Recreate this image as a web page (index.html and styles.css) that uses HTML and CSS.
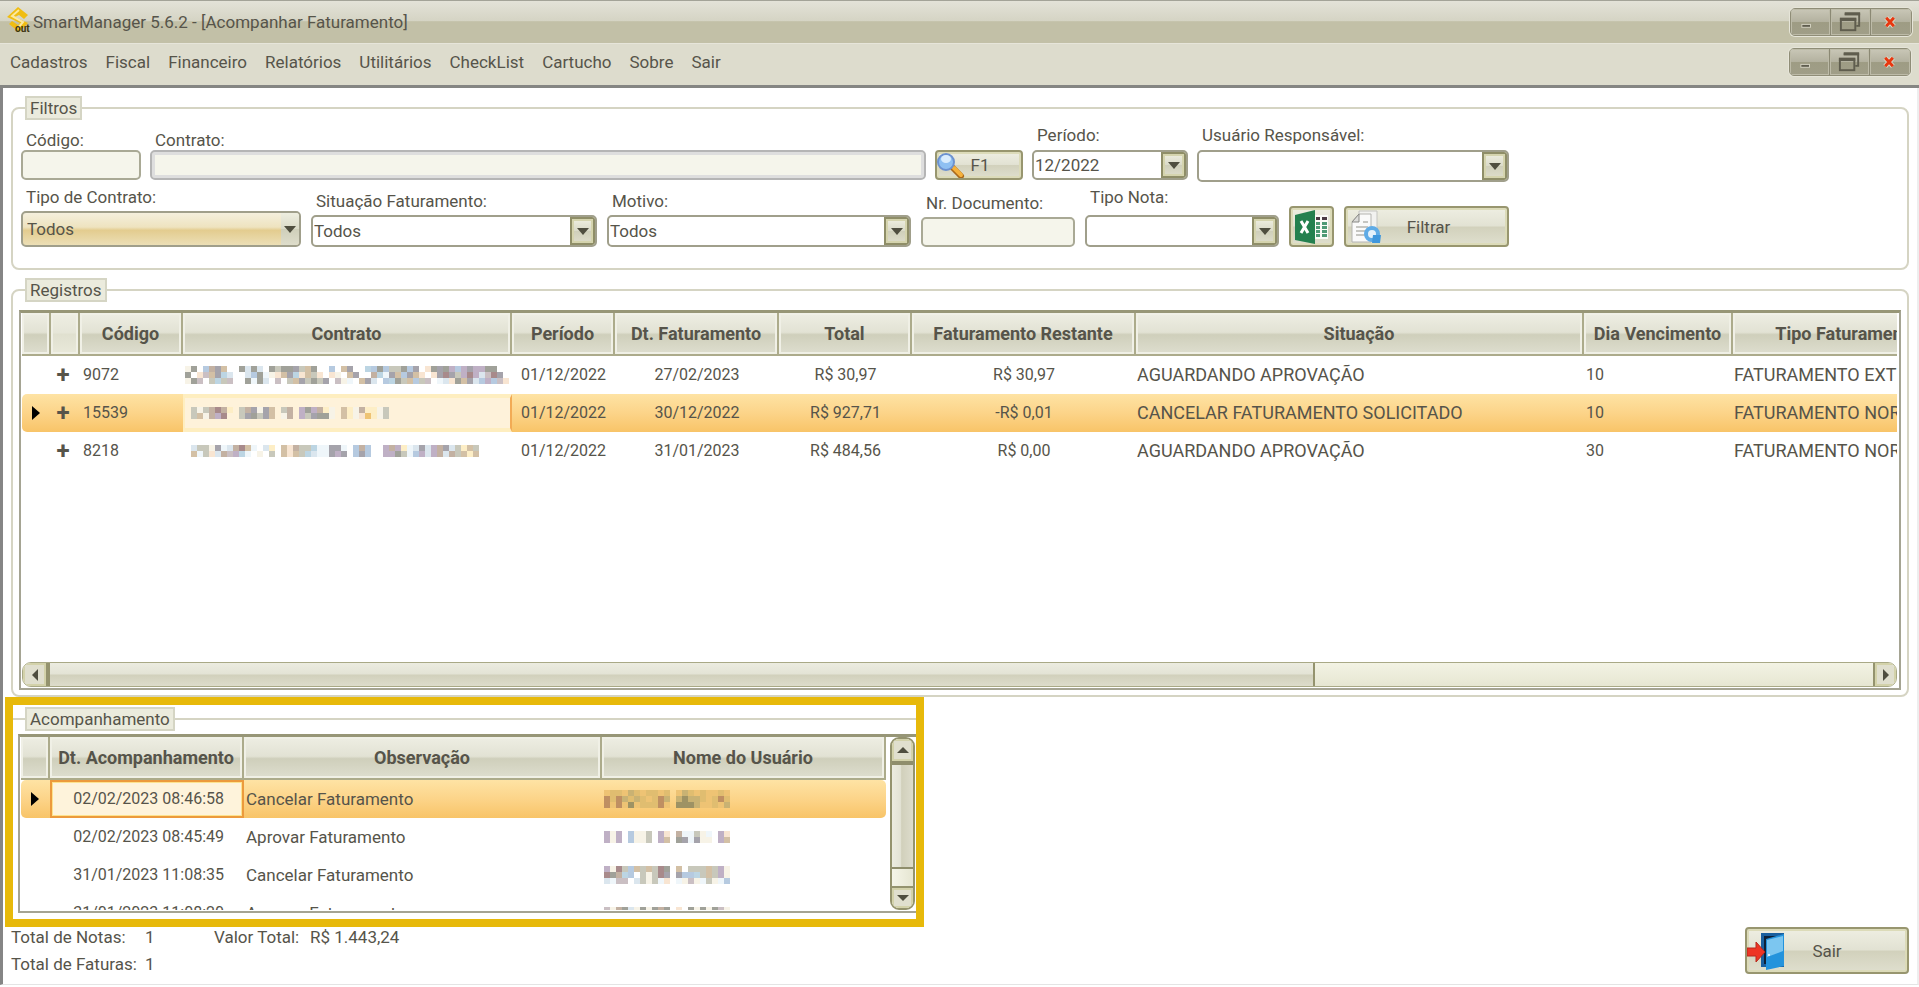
FILE: index.html
```html
<!DOCTYPE html>
<html lang="pt-BR">
<head>
  <meta charset="UTF-8" />
  <meta name="viewport" content="width=device-width, initial-scale=1" />
  <title>SmartManager 5.6.2 - [Acompanhar Faturamento]</title>
  <link rel="stylesheet" href="styles.css">
</head>
<body>
  <header class="titlebar">
    <svg class="logo" viewBox="0 0 24 26" aria-hidden="true">
      <path d="M11 0 L21 8 L17 12 L12 8 L8 10 L21 16 L12 25 L2 17 L5 14 L11 18 L13 16 L0 10 Z" fill="#f0bd12"/>
      <path d="M12 3 L5 9 L16 15 L11 21" fill="none" stroke="#fbe9a0" stroke-width="2"/>
      <text x="8" y="25" class="logo-text">out</text>
    </svg>
    <h1>SmartManager 5.6.2 - [Acompanhar Faturamento]</h1>
    <div class="winbtns">
      <button type="button" aria-label="Minimizar"><svg viewBox="0 0 40 27"><rect x="11" y="16" width="9" height="3" fill="#5f5d4e" stroke="#d5d3c2"/></svg></button>
      <button type="button" aria-label="Restaurar"><svg viewBox="0 0 40 27"><path d="M14 5.500h15v12h-3" fill="none" stroke="#5f5d4e" stroke-width="2"/><path d="M14 5h16" stroke="#5f5d4e" stroke-width="3"/><rect x="10" y="10" width="15" height="12" fill="none" stroke="#5f5d4e" stroke-width="2"/><path d="M9 11h17" stroke="#5f5d4e" stroke-width="3"/></svg></button>
      <button type="button" aria-label="Fechar"><svg viewBox="0 0 40 27"><path d="M15 9l8 9M23 9l-8 9" stroke="#d9d6c6" stroke-width="5"/><path d="M15 9l8 9M23 9l-8 9" stroke="#e8370f" stroke-width="3"/></svg></button>
    </div>
  </header>

  <nav class="menubar">
    <a href="#">Cadastros</a>
    <a href="#">Fiscal</a>
    <a href="#">Financeiro</a>
    <a href="#">Relatórios</a>
    <a href="#">Utilitários</a>
    <a href="#">CheckList</a>
    <a href="#">Cartucho</a>
    <a href="#">Sobre</a>
    <a href="#">Sair</a>
    <div class="winbtns">
      <button type="button" aria-label="Minimizar janela"><svg viewBox="0 0 40 27"><rect x="11" y="16" width="9" height="3" fill="#5f5d4e" stroke="#d5d3c2"/></svg></button>
      <button type="button" aria-label="Restaurar janela"><svg viewBox="0 0 40 27"><path d="M14 5.500h15v12h-3" fill="none" stroke="#5f5d4e" stroke-width="2"/><path d="M14 5h16" stroke="#5f5d4e" stroke-width="3"/><rect x="10" y="10" width="15" height="12" fill="none" stroke="#5f5d4e" stroke-width="2"/><path d="M9 11h17" stroke="#5f5d4e" stroke-width="3"/></svg></button>
      <button type="button" aria-label="Fechar janela"><svg viewBox="0 0 40 27"><path d="M15 9l8 9M23 9l-8 9" stroke="#d9d6c6" stroke-width="5"/><path d="M15 9l8 9M23 9l-8 9" stroke="#e8370f" stroke-width="3"/></svg></button>
    </div>
  </nav>

  <main>
    <fieldset class="group filtros">
      <legend>Filtros</legend>
      <div class="row row-top">
        <div class="field w-codigo low">
          <label for="codigo">Código:</label>
          <input id="codigo" type="text">
        </div>
        <div class="field grow low">
          <label for="contrato">Contrato:</label>
          <input id="contrato" class="locked" type="text" readonly>
        </div>
        <button type="button" class="btn btn-f1">
          <svg width="28" height="26" viewBox="0 0 28 26" aria-hidden="true">
            <path d="M16 16 L24 24" stroke="#a9691c" stroke-width="6" stroke-linecap="round"/>
            <path d="M17 16 L24 23" stroke="#f5b13c" stroke-width="4" stroke-linecap="round"/>
            <circle cx="9" cy="10" r="8" fill="#8fc0f2" stroke="#6d92d0" stroke-width="2"/>
            <ellipse cx="9" cy="7" rx="5" ry="4" fill="#d9ecfd"/>
          </svg>
          <span>F1</span>
        </button>
        <div class="field w-periodo">
          <label for="periodo">Período:</label>
          <div class="combo short"><select id="periodo"><option>12/2022</option></select><span class="arrow"></span></div>
        </div>
        <div class="field w-usuario">
          <label for="usuario">Usuário Responsável:</label>
          <div class="combo"><select id="usuario"><option></option></select><span class="arrow"></span></div>
        </div>
      </div>
      <div class="row row-bottom">
        <div class="field w-tipo">
          <label for="tipo">Tipo de Contrato:</label>
          <div class="combo active"><select id="tipo"><option>Todos</option></select><span class="arrow"></span></div>
        </div>
        <div class="field w-situacao">
          <label for="situacao">Situação Faturamento:</label>
          <div class="combo"><select id="situacao"><option>Todos</option></select><span class="arrow"></span></div>
        </div>
        <div class="field grow">
          <label for="motivo">Motivo:</label>
          <div class="combo"><select id="motivo"><option>Todos</option></select><span class="arrow"></span></div>
        </div>
        <div class="field w-doc">
          <label for="doc">Nr. Documento:</label>
          <input id="doc" type="text">
        </div>
        <div class="field w-nota">
          <label for="nota">Tipo Nota:</label>
          <div class="combo"><select id="nota"><option></option></select><span class="arrow"></span></div>
        </div>
        <button type="button" class="btn btn-excel" aria-label="Exportar para Excel">
          <svg width="34" height="34" viewBox="0 0 34 34" aria-hidden="true">
            <rect x="17" y="5" width="16" height="24" fill="#fbfbf8"/>
            <path d="M21 7h4v3h-4zM27 7h5v3h-5z" fill="#4b3b45"/>
            <path d="M21 12h4v3h-4zM27 12h5v3h-5zM21 16h4v3h-4zM27 16h5v3h-5zM21 20h4v3h-4zM27 20h5v3h-5zM21 24h4v3h-4zM27 24h5v3h-5z" fill="#4f9a76"/>
            <path d="M0 5 L20 0 V34 L0 30 Z" fill="#24804f"/>
            <path d="M6 11 L13 23 M13 11 L6 23" stroke="#fff" stroke-width="3"/>
          </svg>
        </button>
        <button type="button" class="btn btn-filtrar">
          <svg width="32" height="34" viewBox="0 0 32 34" aria-hidden="true">
            <path d="M9 1h18v25H9z" fill="#f2f2f0" stroke="#c4c4c0"/>
            <path d="M9 4 L2 12 V32 H21 V4 Z" fill="#fafafa" stroke="#b4b4b0"/>
            <path d="M9 4 V12 H2 Z" fill="#dcdcda" stroke="#888884"/>
            <path d="M6 17h12M6 21h10M6 25h9M13 12h5" stroke="#c6c6c2" stroke-width="2"/>
            <circle cx="22" cy="24" r="6" fill="#e4f1fb" stroke="#5fabe6" stroke-width="4"/>
            <path d="M23 25 L31 25 L30 33 L22 33 Z" fill="#3f97dd"/>
          </svg>
          <span>Filtrar</span>
        </button>
      </div>
    </fieldset>

    <fieldset class="group registros">
      <legend>Registros</legend>
      <div class="grid">
        <div class="grid-view">
          <table class="tbl-registros">
            <colgroup>
              <col class="c-mark"><col class="c-plus"><col class="c-cod"><col class="c-contrato"><col class="c-periodo"><col class="c-dt">
              <col class="c-total"><col class="c-rest"><col class="c-sit"><col class="c-dia"><col class="c-tipofat">
            </colgroup>
            <thead>
              <tr>
                <th></th><th class="soft"></th><th>Código</th><th>Contrato</th><th>Período</th><th>Dt. Faturamento</th>
                <th>Total</th><th>Faturamento Restante</th><th>Situação</th><th>Dia Vencimento</th><th>Tipo Faturamento</th>
              </tr>
            </thead>
            <tbody>
              <tr>
                <td></td><td class="plus">+</td><td class="cod">9072</td><td><span class="mosaic" data-m="a"></span></td>
                <td class="num">01/12/2022</td><td class="num">27/02/2023</td><td class="num">R$ 30,97</td><td class="num">R$ 30,97</td>
                <td class="caps">AGUARDANDO APROVAÇÃO</td><td class="dia">10</td><td class="caps">FATURAMENTO EXTRA</td>
              </tr>
              <tr class="selected">
                <td><span class="marker"></span></td><td class="plus">+</td><td class="cod">15539</td><td class="blank"><span class="mosaic" data-m="b"></span></td>
                <td class="num">01/12/2022</td><td class="num">30/12/2022</td><td class="num">R$ 927,71</td><td class="num">-R$ 0,01</td>
                <td class="caps">CANCELAR FATURAMENTO SOLICITADO</td><td class="dia">10</td><td class="caps">FATURAMENTO NORMAL</td>
              </tr>
              <tr>
                <td></td><td class="plus">+</td><td class="cod">8218</td><td><span class="mosaic" data-m="c"></span></td>
                <td class="num">01/12/2022</td><td class="num">31/01/2023</td><td class="num">R$ 484,56</td><td class="num">R$ 0,00</td>
                <td class="caps">AGUARDANDO APROVAÇÃO</td><td class="dia">30</td><td class="caps">FATURAMENTO NORMAL</td>
              </tr>
            </tbody>
          </table>
        </div>
        <div class="hscroll">
          <button type="button" class="sb-left" aria-label="Rolar para a esquerda"></button>
          <div class="thumb"></div>
          <div class="track"></div>
          <button type="button" class="sb-right" aria-label="Rolar para a direita"></button>
        </div>
      </div>
    </fieldset>

    <section class="destaque">
      <fieldset class="group acomp">
        <legend>Acompanhamento</legend>
        <div class="grid grid-acomp">
          <div class="grid-view">
            <table class="tbl-acomp">
              <colgroup><col class="c-mark"><col class="c-dtac"><col class="c-obs"><col></colgroup>
              <thead>
                <tr><th></th><th>Dt. Acompanhamento</th><th>Observação</th><th>Nome do Usuário</th></tr>
              </thead>
              <tbody>
                <tr class="selected"><td><span class="marker"></span></td><td class="when focus">02/02/2023 08:46:58</td><td>Cancelar Faturamento</td><td><span class="mosaic" data-m="d"></span></td></tr>
                <tr><td></td><td class="when">02/02/2023 08:45:49</td><td>Aprovar Faturamento</td><td><span class="mosaic" data-m="e"></span></td></tr>
                <tr><td></td><td class="when">31/01/2023 11:08:35</td><td>Cancelar Faturamento</td><td><span class="mosaic" data-m="f"></span></td></tr>
                <tr><td></td><td class="when">31/01/2023 11:08:20</td><td>Aprovar Faturamento</td><td><span class="mosaic" data-m="g"></span></td></tr>
              </tbody>
            </table>
          </div>
          <div class="vscroll">
            <button type="button" class="sb-up" aria-label="Rolar para cima"></button>
            <div class="thumb"></div>
            <div class="track"></div>
            <button type="button" class="sb-down" aria-label="Rolar para baixo"></button>
          </div>
        </div>
      </fieldset>
    </section>

    <footer class="rodape">
      <dl class="totais">
        <dt>Total de Notas:</dt><dd>1</dd><dt>Valor Total:</dt><dd>R$ 1.443,24</dd>
        <dt>Total de Faturas:</dt><dd>1</dd>
      </dl>
      <button type="button" class="btn btn-sair">
        <svg width="38" height="40" viewBox="0 0 38 40" aria-hidden="true">
          <path d="M14 2h23v34H14z" fill="#1a5f9e"/>
          <path d="M17 5h17v28H17z" fill="#0f2036"/>
          <path d="M19 8 L37 3 V35 L19 39 Z" fill="#2493dc"/>
          <path d="M20 9 L36 5 V20 L20 26 Z" fill="#7cc6f0"/>
          <circle cx="22" cy="24" r="1" fill="#fff"/>
          <path d="M0 17h9v-6l9 10l-9 10v-6H0z" fill="#ee3524" stroke="#b8281c"/>
        </svg>
        <span>Sair</span>
      </button>
    </footer>
  </main>

  <script src="script.js"></script>
</body>
</html>
```
FILE: styles.css
```css
* {
  box-sizing: border-box;
}

body {
  margin: 0;
  min-height: 100vh;
  display: flex;
  flex-direction: column;
  font-family: Roboto, "Liberation Sans", sans-serif;
  font-size: 17px;
  line-height: 20px;
  color: #56544a;
  background: #fff;
}

button, input, select {
  font: inherit;
  color: inherit;
  margin: 0;
}

/* title bar and menu */
.titlebar {
  display: flex;
  align-items: center;
  height: 43px;
  padding: 0 7px 0 7px;
  border-top: 1px solid #a3a398;
  background: linear-gradient(#e3e2d8 0, #d5d4c4 48%, #c2c0a7 49%, #c2c0a7 100%);
}

.logo {
  width: 24px;
  height: 26px;
  margin: 0 2px 4px 0;
}

.logo-text {
  font: bold 10px Roboto, sans-serif;
  fill: #3d3510;
}

h1 {
  margin: 0;
  font-size: 17px;
  font-weight: normal;
}

.menubar {
  display: flex;
  align-items: center;
  gap: 18px;
  height: 45px;
  padding: 0 8px 6px 10px;
  border-top: 1px solid #e6e5da;
  border-bottom: 3px solid #858683;
  background: #dddccd;
}

.menubar a {
  color: inherit;
  text-decoration: none;
}

.winbtns {
  display: flex;
  margin-left: auto;
  border: 1px solid #8f8d77;
  border-radius: 5px;
  overflow: hidden;
  box-shadow: 0 0 0 1px #e6e5d9;
}

.winbtns button {
  width: 40px;
  height: 26px;
  padding: 0;
  border: 0;
  border-right: 1px solid #8b8974;
  background: linear-gradient(#c9c7b7 0, #b4b2a0 48%, #9e9c84 52%, #a09e88 100%);
  box-shadow: inset 0 0 0 1px #bdbba8;
}

.winbtns button:last-child {
  border-right: 0;
}

.winbtns svg {
  display: block;
  width: 100%;
  height: 100%;
}

main {
  flex: 1;
  margin-bottom: 2px;
  padding: 8px 8px 9px;
  border-left: 3px solid #858585;
  border-right: 2px solid #eeeeee;
  border-bottom: 1px solid #e4e4e4;
}

/* group boxes */
.group {
  margin: 0;
  padding: 8px 6px 5px;
  min-width: 0;
  border: 2px solid #d5d4c3;
  border-radius: 8px;
}

.group legend {
  margin-left: 6px;
  padding: 0 3px;
  border: 2px solid #d5d5c4;
  background: #ebebdd;
}

.filtros {
  padding: 5px 8px 21px;
}

.filtros legend {
  margin-left: 4px;
}

.row {
  display: flex;
  gap: 10px;
  max-width: 1488px;
}

.row-top {
  align-items: flex-start;
  gap: 9px;
  margin-bottom: 5px;
}

.row-bottom {
  align-items: flex-end;
}

.field {
  display: flex;
  flex-direction: column;
  gap: 4px;
}

.row-top .field {
  gap: 5px;
}

.row-top .low {
  gap: 0;
  padding-top: 5px;
}

.field label {
  padding-left: 5px;
}

.grow { flex: 1; }
.w-codigo { width: 120px; }
.w-periodo { width: 156px; }
.w-usuario { width: 312px; }
.w-tipo { width: 280px; }
.w-situacao { width: 286px; }
.w-doc { width: 154px; }
.w-nota { width: 194px; }
.row-bottom .w-nota { gap: 8px; }

input {
  width: 100%;
  height: 30px;
  padding: 0 4px;
  border: 2px solid #a9a995;
  border-radius: 5px;
  background: #f5f5eb;
}

input.locked {
  border-color: #b5b5b5;
  box-shadow: inset 0 0 0 3px #dedede;
}

.combo {
  display: flex;
  height: 32px;
  border: 2px solid #a09f8b;
  border-radius: 5px;
  background: #fff;
  overflow: hidden;
}

.combo.short {
  height: 30px;
}

.combo.active {
  height: 36px;
  background: linear-gradient(#f4efdd 0, #eee3bf 44%, #e3cc8f 54%, #ecdfb6 100%);
}

.combo select {
  flex: 1;
  min-width: 0;
  padding: 0 1px;
  border: 0;
  appearance: none;
  background: transparent;
}

.combo.active select {
  padding: 0 4px;
}

.arrow {
  display: flex;
  align-items: center;
  justify-content: center;
  width: 25px;
  border: 2px solid #8f8e68;
  box-shadow: inset 0 0 0 2px #d5d4ae;
  background: linear-gradient(#eeeee0 0, #dadac8 50%, #cfcfba 51%, #deddcb 100%);
  pointer-events: none;
}

.arrow::after {
  content: "";
  border: 6px solid transparent;
  border-top: 7px solid #4f4e3f;
  border-bottom: 0;
}

.active .arrow {
  width: 18px;
  border: 0;
  box-shadow: none;
}

/* buttons */
.btn {
  display: flex;
  align-items: center;
  padding: 0;
  border: 2px solid #98966f;
  border-radius: 4px;
  box-shadow: inset 0 0 0 2px #dcdbb9;
  background: linear-gradient(#eeeee2 0, #e2e2d3 48%, #d2d1bc 52%, #dfdfce 100%);
}

.btn span {
  flex: 1;
  text-align: center;
}

.btn svg {
  flex: none;
}

.btn-f1 {
  width: 88px;
  height: 30px;
  margin-top: 25px;
}

.btn-f1 span {
  padding-right: 26px;
}

.btn-excel {
  width: 45px;
  height: 41px;
  justify-content: center;
}

.btn-filtrar {
  width: 165px;
  height: 41px;
  padding-left: 4px;
}

.btn-filtrar span {
  padding-right: 32px;
}

/* grids */
.registros {
  margin-top: 8px;
}

.registros .grid-view {
  height: 349px;
}

.grid {
  display: flex;
  flex-direction: column;
  padding: 0 2px 1px 1px;
  border: 2px solid #a5a493;
  border-top: 3px solid #979677;
}

.grid-view {
  overflow: hidden;
}

table {
  border-collapse: separate;
  border-spacing: 0;
  table-layout: fixed;
}

.tbl-registros { width: 1941px; }
.c-mark { width: 29px; }
.c-plus { width: 29px; }
.c-cod { width: 103px; }
.c-contrato { width: 329px; }
.c-periodo { width: 103px; }
.c-dt { width: 164px; }
.c-total { width: 133px; }
.c-rest { width: 224px; }
.c-sit { width: 448px; }
.c-dia { width: 149px; }
.c-tipofat { width: 230px; }

th {
  height: 43px;
  padding: 0;
  border-right: 2px solid #acab8b;
  border-bottom: 2px solid #acab8b;
  box-shadow: inset 0 0 0 2px #f0f0e6;
  background: linear-gradient(#eeeee3 0, #e2e2d4 47%, #cfcfbb 53%, #dedecf 100%);
  font-size: 18px;
  white-space: nowrap;
}

th.soft {
  background: linear-gradient(#eeeee3 0, #e6e6d8 48%, #e0e0cf 52%, #e9e9da 100%);
}

td {
  height: 38px;
  padding: 0 0 0 2px;
  white-space: nowrap;
}

td.caps {
  padding-left: 1px;
  font-size: 18px;
}

td.cod {
  padding-left: 3px;
  font-size: 16px;
}

td.num {
  padding: 0;
  font-size: 16px;
  text-align: center;
}

td.dia {
  font-size: 16px;
}

td.plus {
  padding: 0 5px 0 0;
  font-size: 24px;
  font-weight: bold;
  text-align: center;
}

.selected td {
  background: linear-gradient(#fee3a4 0, #fcd489 50%, #f8c468 100%);
}

.selected td:first-child {
  border-radius: 5px 0 0 5px;
}

.selected td:last-child {
  border-radius: 0 5px 5px 0;
}

.selected td.blank {
  padding: 0;
  border: solid #feeec0;
  border-width: 4px 0 4px 2px;
  border-right: 2px solid #f2ab55;
  background: #fef2da;
}

.selected td.focus {
  padding-right: 18px;
  border: 2px solid #ec9a3c;
  box-shadow: inset 0 0 0 1px #fde28d;
  background: #fef3db;
}

.marker {
  display: block;
  margin-left: 8px;
  width: 0;
  border: 7px solid transparent;
  border-left: 8px solid #000;
  border-right: 0;
}

.mosaic svg {
  display: block;
}

/* scroll bars */
.hscroll, .vscroll {
  display: flex;
  border: 1px solid #a9a986;
  border-radius: 9px;
  overflow: hidden;
}

.hscroll {
  height: 25px;
  background: linear-gradient(#f3f3e4, #e6e6d2);
}

.hscroll button {
  width: 23px;
}

.hscroll .thumb {
  width: 1269px;
  border: 2px solid #94936e;
  border-width: 0 2px 0 4px;
  background: linear-gradient(#ecece0 0, #e3e3d5 48%, #d1d0bb 52%, #dddccc 100%);
}

.track {
  flex: 1;
}

.hscroll button, .vscroll button {
  display: flex;
  align-items: center;
  justify-content: center;
  padding: 0;
  border: 0;
  background: #e0dfce;
  box-shadow: inset 0 0 0 2px #d3d2aa;
}

.sb-left::after, .sb-right::after, .sb-up::after, .sb-down::after {
  content: "";
  border: 6px solid transparent;
}

.sb-left::after { border-right-color: #4f4e3f; border-left: 0; }
.sb-right::after { border-left-color: #4f4e3f; border-right: 0; }
.sb-up::after { border-bottom-color: #4f4e3f; border-top: 0; }
.sb-down::after { border-top-color: #4f4e3f; border-bottom: 0; }

.hscroll .sb-right {
  border-left: 2px solid #94936e;
}

.vscroll {
  flex: none;
  flex-direction: column;
  width: 25px;
  border-width: 2px;
  border-color: #94936e;
  background: linear-gradient(90deg, #f5f5e8, #e6e6d2);
}

.vscroll button {
  height: 22px;
}

.vscroll .thumb {
  height: 108px;
  border: solid #8f8e6c;
  border-width: 4px 0 2px;
  background: linear-gradient(90deg, #ecece0 0, #e3e3d5 40%, #d1d0bb 46%, #dddccc 100%);
}

.vscroll .sb-down {
  border-top: 2px solid #94936e;
}

/* highlighted box */
.destaque {
  width: 919px;
  max-width: 100%;
  margin-left: -6px;
  border: 8px solid #e7b90a;
}

.acomp {
  padding: 3px 0 6px 5px;
  border-width: 2px 0 0;
  border-radius: 0;
  margin-top: 2px;
}

.acomp legend {
  margin-left: 7px;
}

.grid-acomp {
  flex-direction: row;
  gap: 4px;
  height: 179px;
  padding: 0 1px 1px;
  border-right: 0;
}

.grid-acomp .grid-view {
  flex: 1;
}

.tbl-acomp { width: 100%; }
.c-dtac { width: 194px; }
.c-obs { width: 358px; }

td.when {
  padding: 0 20px 0 0;
  font-size: 16px;
  text-align: right;
}

/* footer */
.rodape {
  display: flex;
  justify-content: space-between;
}

.totais {
  display: grid;
  grid-template-columns: 134px 69px 96px auto;
  grid-template-rows: 20px 20px;
  row-gap: 7px;
  margin: 0;
}

.totais dd {
  margin: 0;
}

.btn-sair {
  width: 164px;
  height: 47px;
}

.btn-sair span {
  padding-right: 38px;
}
```
FILE: script.js
```js
// censored names, one letter per block of colour
const colors = {
  k: '#a0a199', b: '#b6cae0', o: '#f8e5d2', t: '#d3c0a5', g: '#c8c8bb',
  m: '#a5a3ab', p: '#cabfc3', s: '#bcd5e3', i: '#eff6fa', c: '#f7f3e7',
  r: '#a88a8b', v: '#bfb0c5', l: '#dbe6ee', n: '#c3b1a2', y: '#fdeec6',
  h: '#bf8f62', a: '#e0bd70', e: '#c9b273', d: '#9e9264', f: '#eec374'
};

const mosaics = {
  a: { size: 6, rows: [
    'ck.bnmt..klkl.kgkkmgtk..b.tm..sbkbggkbm.okmkvbvmvvkk..',
    'k.optmsl..lbkicotmsotgo.oc.tm..nsimtbmto.omrmgvrvlprm.',
    'ckp.gsgp..kikl.p.gtmgkgm.pci.tml.bskgtbgp.iloktmlbvbpo'] },
  b: { size: 6, indent: 6, rows: [
    'gcgnrny.gnmcmt.gn.vkvnyc.tycnyycg',
    'gtcnvr..gmkgmt.cn.vgmkkc.tycofycg'] },
  c: { size: 6, indent: 6, rows: [
    'lggcmilnrti.ly.tonggsiimmi.bnb..vnvyilmlvnmlgytg',
    'tigolnpvsi.c.g.totgsliimvm.bmb..vvkgibvlvnlngtyt'] },
  d: { size: 6, rows: [
    'faafeafaafa.feafaffaf',
    'haheaeafahe.edeeafaha',
    'hfhfdfaaahf.dddeffafe'] },
  e: { size: 6, rows: [
    'vcv.bccg.vo.niigci.vo',
    'vcv.bccg.vt.kmimcc.vt'] },
  f: { size: 6, rows: [
    'vcrgbtgtgrk.t.gggtgvc',
    'rknsb.gcgrm.mbbsgtgvc',
    'lipp.lgcgio.icpcigcib'] },
  g: { size: 6, rows: [
    'pcnklckcknk.o.kckckpc',
    'pcpglcgcgpg.l.lcgcgpc'] }
};

document.querySelectorAll('.mosaic').forEach(el => {
  const m = mosaics[el.dataset.m];
  const indent = m.indent || 0;
  const w = m.rows[0].length * m.size + indent;
  let out = `<svg width="${w}" height="${m.rows.length * m.size}" shape-rendering="crispEdges">`;
  m.rows.forEach((row, y) => {
    [...row].forEach((ch, x) => {
      if (colors[ch]) {
        out += `<rect x="${x * m.size + indent}" y="${y * m.size}" width="${m.size}" height="${m.size}" fill="${colors[ch]}"/>`;
      }
    });
  });
  el.innerHTML = out + '</svg>';
});
```
